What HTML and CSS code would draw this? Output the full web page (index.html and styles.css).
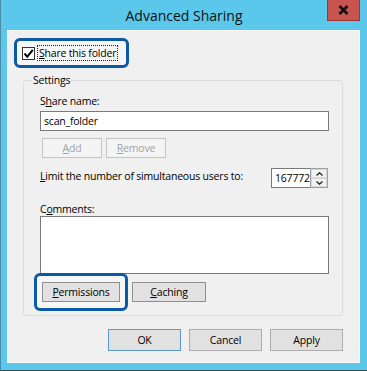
FILE: index.html
```html
<!DOCTYPE html>
<html lang="en">
<head>
    <meta charset="UTF-8">
    <title>Advanced Sharing</title>
    <link rel="stylesheet" href="styles.css">
</head>
<body>
    <div class="window">
        <div class="titlebar">
            <span class="title">Advanced Sharing</span>
            <div class="close">
                <svg width="11" height="10" viewBox="0 0 11 10"><path d="M1.5 1 L9.5 9 M9.5 1 L1.5 9" stroke="#111" stroke-width="2.6"/></svg>
            </div>
        </div>
        <div class="client">
            <div class="callout share-box">
                <span class="checkbox">
                    <svg width="11" height="11" viewBox="0 0 11 11"><path d="M1.5 5.5 L4.3 8.6 L9.8 1.8" fill="none" stroke="#000" stroke-width="2"/></svg>
                </span>
                <span class="focus-text"><u>S</u>hare this folder</span>
            </div>

            <fieldset class="group">
                <legend>Settings</legend>
                <div class="group-body">
                    <div class="label">S<u>h</u>are name:</div>
                    <div class="textbox">scan_folder</div>
                    <div class="btn-row">
                        <button class="btn small" disabled><u>A</u>dd</button>
                        <button class="btn small" disabled><u>R</u>emove</button>
                    </div>
                    <div class="limit-row">
                        <span class="label"><u>L</u>imit the number of simultaneous users to:</span>
                        <div class="spinner">
                            <div class="spin-value">16777216</div>
                            <div class="spin-arrows">
                                <div class="arrow"><svg width="7" height="4" viewBox="0 0 7 4"><path d="M0.5 3.5 L3.5 0.8 L6.5 3.5" fill="none" stroke="#222" stroke-width="1.3"/></svg></div>
                                <div class="arrow"><svg width="7" height="4" viewBox="0 0 7 4"><path d="M0.5 0.5 L3.5 3.2 L6.5 0.5" fill="none" stroke="#222" stroke-width="1.3"/></svg></div>
                            </div>
                        </div>
                    </div>
                    <div class="label comments-label">C<u>o</u>mments:</div>
                    <div class="textarea"></div>
                    <div class="btn-row bottom-row">
                        <span class="callout-wrap">
                            <button class="btn perm"><u>P</u>ermissions</button>
                        </span>
                        <button class="btn cache"><u>C</u>aching</button>
                    </div>
                </div>
            </fieldset>

            <div class="dialog-buttons">
                <button class="btn dlg default">OK</button>
                <button class="btn dlg">Cancel</button>
                <button class="btn dlg">Apply</button>
            </div>
        </div>
    </div>
</body>
</html>
```

FILE: styles.css
```css
body {
    margin: 0;
    font-family: 'Open Sans', 'Noto Sans', sans-serif;
    font-size: 10.5px;
    letter-spacing: -0.2px;
    color: #000;
}
.window {
    width: 367px;
    height: 371px;
    box-sizing: border-box;
    background-color: #5bc8eb;
    border-left: 1px solid #4b8aa6;
    border-bottom: 1px solid #3a4a52;
    display: flex;
    flex-direction: column;
}
.titlebar {
    position: relative;
    height: 30px;
    display: flex;
    justify-content: center;
    align-items: center;
}
.title {
    font-size: 14px;
    letter-spacing: 0;
    color: #111;
    padding-top: 1px;
}
.close {
    position: absolute;
    top: 0;
    left: 326px;
    width: 33px;
    height: 21px;
    box-sizing: border-box;
    background-color: #c9534f;
    border: 1px solid #9e3532;
    border-top: none;
    display: flex;
    justify-content: center;
    align-items: center;
}
.client {
    flex: 1;
    margin: 0 7px 7px 6px;
    background-color: #f0f0f0;
    border: 1px solid #fbfbfb;
    display: flex;
    flex-direction: column;
}

/* blue callouts */
.callout {
    border: 3px solid #0c5aa6;
    border-radius: 6px;
    background-color: #f6f6f6;
    box-sizing: border-box;
}
.share-box {
    margin: 7px 0 0 6px;
    width: 115px;
    height: 30px;
    display: flex;
    align-items: center;
    padding-left: 5px;
}
.checkbox {
    width: 13px;
    height: 13px;
    box-sizing: border-box;
    border: 1px solid #333;
    background-color: #fff;
    display: flex;
    justify-content: center;
    align-items: center;
}
.focus-text {
    margin-left: 2px;
    border: 1px dotted #222;
    padding: 0 1px;
    line-height: 14px;
}

/* settings group */
.group {
    margin: 4px 16px 0 15px;
    padding: 0;
    border: 1px solid #dcdcdc;
    border-radius: 3px;
}
.group legend {
    margin-left: 8px;
    padding: 0 1px;
    line-height: 16px;
}
.group-body {
    padding: 6px 13px 13px 16px;
}
.label {
    line-height: 14px;
}
.textbox {
    margin-top: 3px;
    height: 20px;
    box-sizing: border-box;
    border: 1px solid #7a7a7a;
    background-color: #fff;
    padding-left: 3px;
    line-height: 18px;
}
.btn-row {
    display: flex;
    gap: 4px;
    margin: 7px 0 0 2px;
}
.btn {
    font-family: inherit;
    font-size: 10.5px;
    letter-spacing: -0.2px;
    color: #000;
    background-color: #e1e1e1;
    border: 1px solid #8f8f8f;
    height: 20px;
    padding: 0;
    box-sizing: border-box;
}
.btn.small {
    width: 60px;
}
.btn:disabled {
    background-color: #f4f4f4;
    border-color: #c4c4c4;
    color: #a3a3a3;
}
.limit-row {
    margin-top: 10px;
    display: flex;
    justify-content: space-between;
    align-items: flex-start;
}
.limit-row .label {
    margin-top: 1px;
}
.spinner {
    display: flex;
    height: 20px;
    margin-right: 1px;
}
.spin-value {
    width: 39px;
    box-sizing: border-box;
    border: 1px solid #7a7a7a;
    border-right: none;
    background-color: #fff;
    padding-left: 3px;
    line-height: 18px;
    overflow: hidden;
    white-space: nowrap;
}
.spin-arrows {
    width: 18px;
    display: flex;
    flex-direction: column;
    border: 1px solid #a0a0a0;
    box-sizing: border-box;
    background-color: #fff;
}
.arrow {
    flex: 1;
    display: flex;
    justify-content: center;
    align-items: center;
    background-color: #f2f2f2;
    border: 1px solid #d8d8d8;
}
.comments-label {
    margin-top: 14px;
}
.textarea {
    height: 58px;
    box-sizing: border-box;
    border: 1px solid #7a7a7a;
    background-color: #fff;
}
.bottom-row {
    margin-top: 8px;
    gap: 12px;
}
.callout-wrap {
    position: relative;
    display: inline-flex;
}
.callout-wrap::before {
    content: "";
    position: absolute;
    top: -9px;
    bottom: -9px;
    left: -8px;
    right: -8px;
    border: 3px solid #0c5aa6;
    border-radius: 6px;
    background-color: #f6f6f6;
}
.btn.perm {
    position: relative;
    width: 78px;
}
.btn.cache {
    width: 74px;
}

/* OK / Cancel / Apply */
.dialog-buttons {
    margin-top: 13px;
    padding-right: 16px;
    display: flex;
    justify-content: flex-end;
    gap: 8px;
}
.btn.dlg {
    width: 73px;
    height: 22px;
    border-color: #adadad;
}
.btn.dlg.default {
    border-color: #5a98cf;
}
```
